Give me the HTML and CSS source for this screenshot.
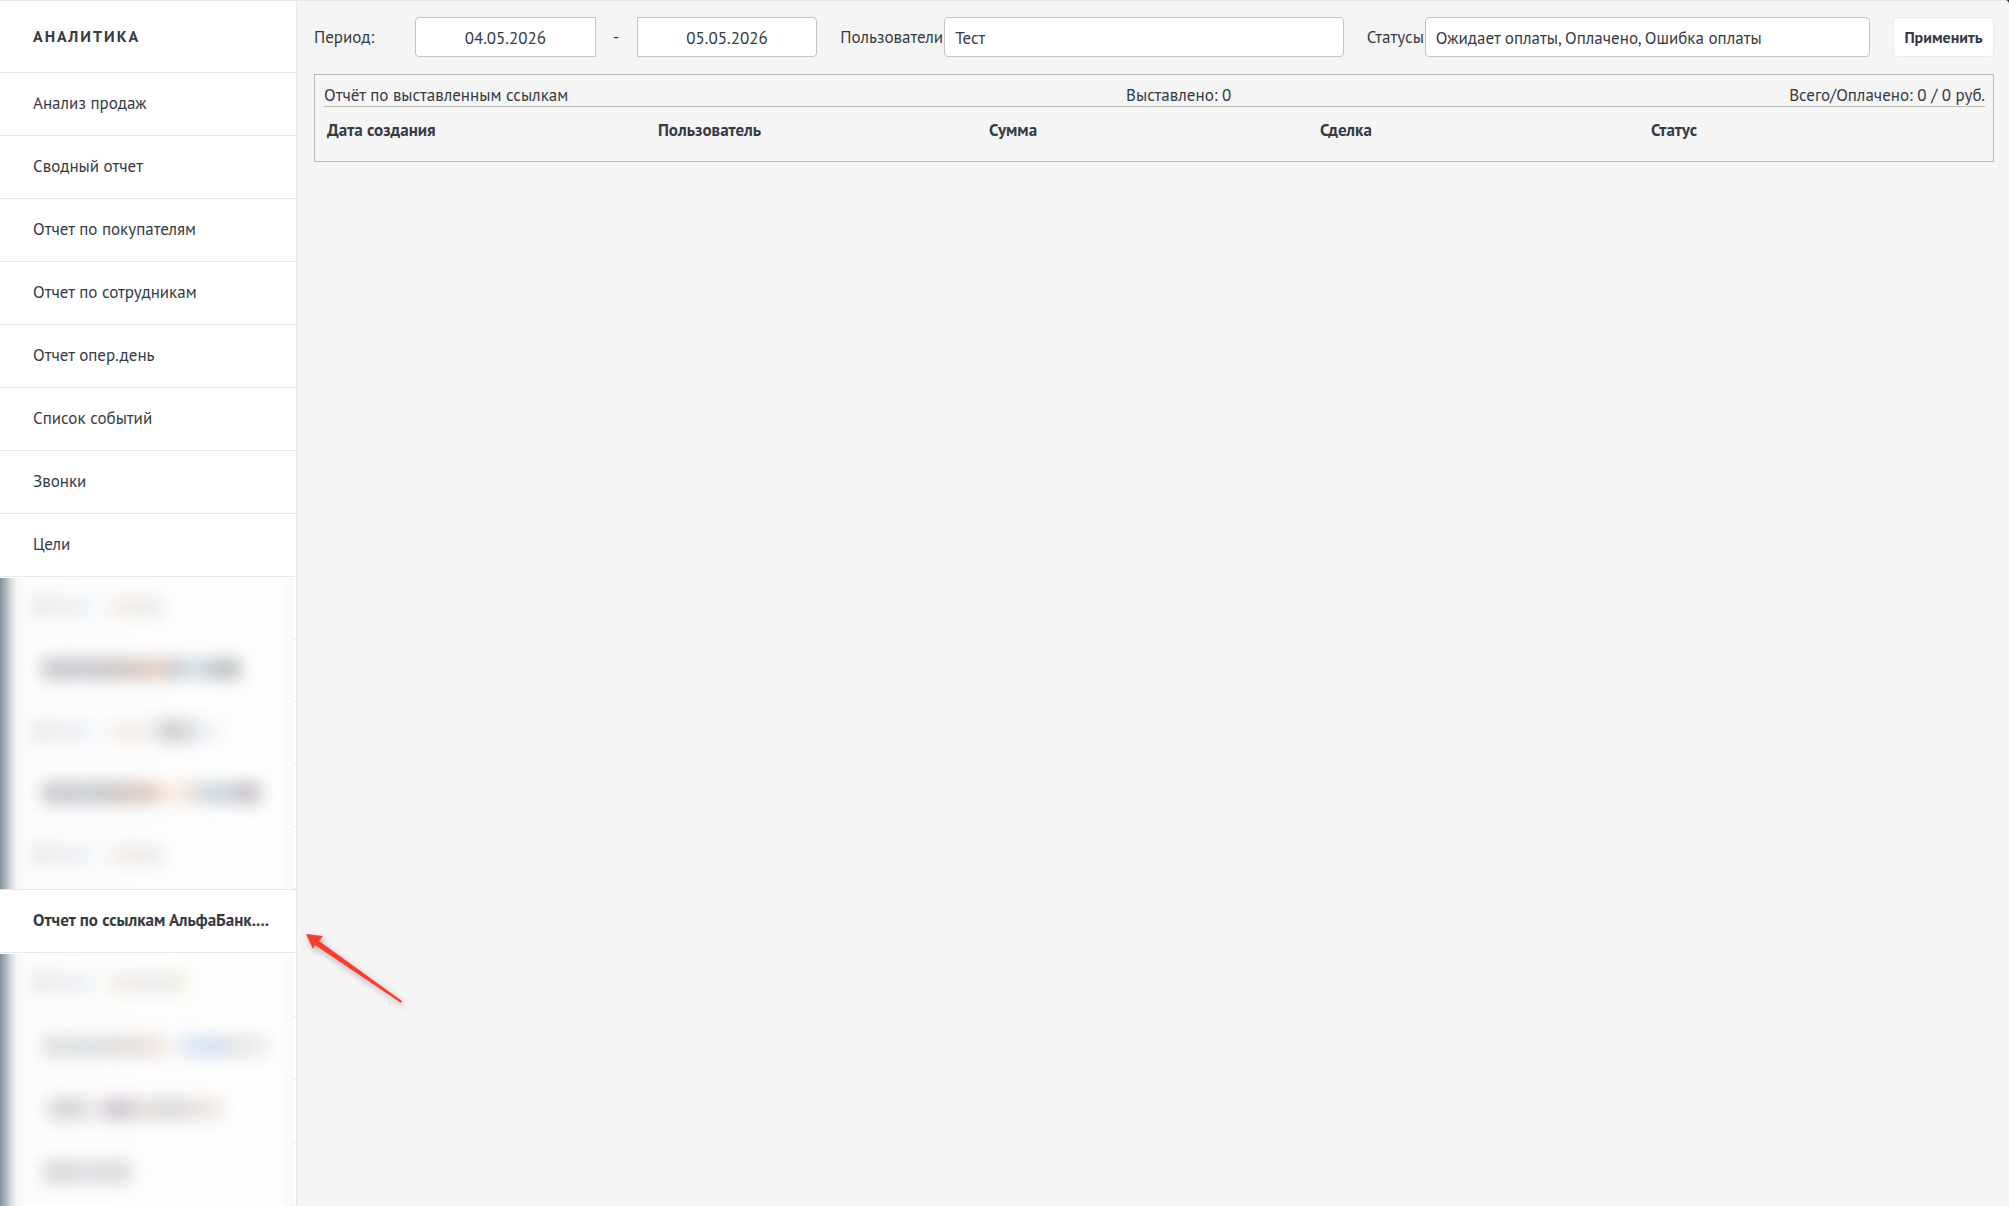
FILE: index.html
```html
<!DOCTYPE html>
<html lang="ru">
<head>
    <meta charset="UTF-8">
    <title>Аналитика</title>
    <link rel="stylesheet" href="styles.css">
</head>
<body>
<div class="page">
    <aside class="sidebar">
        <h1 class="sidebar-title">Аналитика</h1>
        <ul class="menu">
            <li><a href="#">Анализ продаж</a></li>
            <li><a href="#">Сводный отчет</a></li>
            <li><a href="#">Отчет по покупателям</a></li>
            <li><a href="#">Отчет по сотрудникам</a></li>
            <li><a href="#">Отчет опер.день</a></li>
            <li><a href="#">Список событий</a></li>
            <li><a href="#">Звонки</a></li>
            <li><a href="#">Цели</a></li>
        </ul>
        <div class="hidden-group" aria-hidden="true">
            <div class="hidden-row"><span class="smudge pale"></span></div>
            <div class="hidden-row"><span class="smudge dark"></span></div>
            <div class="hidden-row"><span class="smudge pale-long"></span></div>
            <div class="hidden-row"><span class="smudge dark-long"></span></div>
            <div class="hidden-row"><span class="smudge pale"></span></div>
        </div>
        <ul class="menu">
            <li><a class="active" href="#">Отчет по ссылкам АльфаБанк....</a></li>
        </ul>
        <div class="hidden-group last" aria-hidden="true">
            <div class="hidden-row"><span class="smudge pale-green"></span></div>
            <div class="hidden-row"><span class="smudge blue"></span></div>
            <div class="hidden-row"><span class="smudge violet"></span></div>
            <div class="hidden-row"><span class="smudge short"></span></div>
        </div>
    </aside>
    <main class="content">
        <form class="filter">
            <div class="field">
                <label class="period-label" for="date-from">Период:</label>
                <input class="date from" id="date-from" type="text" value="04.05.2026">
                <span class="dash">-</span>
                <input class="date to" type="text" value="05.05.2026" aria-label="Период по">
            </div>
            <div class="field">
                <label class="users-label" for="users">Пользователи</label>
                <input id="users" type="text" value="Тест">
            </div>
            <div class="field">
                <label class="status-label" for="statuses">Статусы</label>
                <input id="statuses" type="text" value="Ожидает оплаты, Оплачено, Ошибка оплаты">
            </div>
            <button class="apply" type="button">Применить</button>
        </form>
        <section class="report">
            <div class="report-head">
                <span>Отчёт по выставленным ссылкам</span>
                <span>Выставлено: 0</span>
                <span>Всего/Оплачено: 0 / 0 руб.</span>
            </div>
            <div class="report-body">
                <table class="report-table">
                    <thead>
                        <tr>
                            <th>Дата создания</th>
                            <th>Пользователь</th>
                            <th>Сумма</th>
                            <th>Сделка</th>
                            <th>Статус</th>
                        </tr>
                    </thead>
                </table>
            </div>
        </section>
    </main>
    <svg class="arrow" width="110" height="84" viewBox="0 0 110 84" aria-hidden="true">
        <path d="M6 6 L23 8 L19 13 L102 73 L101 75 L15 17 L13 21 Z" fill="#ff3b2f"/>
    </svg>
</div>
</body>
</html>
```
FILE: styles.css
```css
*{
    box-sizing: border-box;
}
html{
    background: #1c1320;
}
body{
    margin: 0;
    color: #363b44;
    font: 17px/20px "PT Sans", Roboto, sans-serif;
}
.page{
    position: relative;
    display: flex;
    min-height: 100vh;
    border-top: 1px solid #e6e6e6;
    border-top-right-radius: 4px;
    background: #f5f5f5;
    overflow: hidden;
}

/* sidebar */
.sidebar{
    display: flex;
    flex-direction: column;
    flex: none;
    width: 297px;
    border-right: 1px solid #e8e8e8;
    background: #fff;
}
.sidebar-title{
    height: 72px;
    margin: 0;
    padding: 0 33px;
    border-bottom: 1px solid #e8e8e8;
    font-size: 16px;
    line-height: 70px;
    letter-spacing: 2px;
    text-transform: uppercase;
}
.menu{
    margin: 0;
    padding: 0;
    list-style: none;
}
.menu li{
    border-bottom: 1px solid #e8e8e8;
}
.menu a{
    display: block;
    height: 62px;
    padding: 0 26px 0 33px;
    line-height: 60px;
    color: #363b44;
    text-decoration: none;
    white-space: nowrap;
}
.menu .active{
    font-weight: bold;
}

/* blurred rows */
.hidden-group{
    display: flex;
    flex-direction: column;
    height: 313px;
    padding-top: 1px;
    border-bottom: 1px solid #e8e8e8;
}
.hidden-group.last{
    flex: 1;
    height: auto;
    border-bottom: none;
}
.hidden-row{
    display: flex;
    align-items: center;
    flex: 1;
    padding: 0 2px 5px 0;
    background:
        linear-gradient(#e8e8e8, #e8e8e8) right bottom / 2px 1px no-repeat,
        linear-gradient(to right, #84929c 0, #a7b0b7 5px, #d9dde0 11px, #f5f6f7 17px, #fcfcfc 26px, #fefefe 280px, #f9f9f9 294px, #fff 294px);
}
.smudge{
    height: 22px;
    margin-left: 42px;
    filter: blur(8px);
    opacity: .85;
}
.pale, .pale-long, .pale-green{
    margin-left: 30px;
    opacity: .75;
}
.pale{
    width: 138px;
    background: linear-gradient(to right, #e6e4e1 0, #eeecea 24%, #e5edf8 38%, #fdfdfd 50%, #f3e8de 64%, #e5e7e8 88%, #f0f4f8);
}
.pale-long{
    width: 200px;
    background: linear-gradient(to right, #e6e4e1 0, #eeecea 16%, #e5edf8 26%, #fdfdfd 35%, #f3e8de 46%, #f0eeec 60%, #b9b5b7 70%, #c8c4c6 78%, #e5edf8 86%, #fcfaf4);
}
.pale-green{
    width: 160px;
    background: linear-gradient(to right, #e6e4e1 0, #eeecea 20%, #e5edf8 34%, #fdfdfd 42%, #f3e8de 54%, #e5e7e8 80%, #e6edcf 94%, #fcfcf0);
}
.dark{
    width: 200px;
    background: linear-gradient(to right, #c3bec3 0, #bec4ce 22%, #c5bdb7 34%, #d3c0bb 50%, #e3c9b5 58%, #bfc0cb 68%, #cfe2ee 76%, #b3b8ba 88%, #bcc0c0);
}
.dark-long{
    width: 220px;
    background: linear-gradient(to right, #c3bec3 0, #bec4ce 20%, #c5bdb7 32%, #d3c0bb 44%, #d8c0ab 50%, #faecdc 56%, #f7e4d6 64%, #c7d3dc 74%, #c1cdd7 84%, #bdb2bb 94%, #d0c8d0);
}
.blue{
    width: 230px;
    background: linear-gradient(to right, #dadcdd 0, #d8dce0 20%, #dcdad7 32%, #ebddd5 50%, #fcfaf8 56%, #d5e2f2 64%, #cddcec 76%, #e6e2de 88%, #edf0f7);
}
.violet{
    width: 176px;
    margin-left: 48px;
    background: linear-gradient(to right, #ced1d0 0, #cfcfcf 18%, #f7f0ed 27%, #c6b7cb 36%, #cbbfcd 44%, #e6dcd6 55%, #cfd0d6 70%, #eadfd6 86%, #f0e8e2);
}
.short{
    width: 90px;
    background: linear-gradient(to right, #d7d5d3, #d1d1d1 30%, #d9dce2 52%, #d1d1d1 75%, #d9d9d9);
}

/* filter */
.content{
    flex: 1;
    min-width: 0;
    padding: 16px 15px 16px 17px;
}
.filter{
    display: flex;
    gap: 23px;
    margin-bottom: 17px;
}
.field{
    display: flex;
    align-items: center;
    flex: 1;
    min-width: 0;
}
.field label{
    flex: none;
    white-space: nowrap;
}
.period-label{
    width: 101px;
}
.users-label{
    width: 104px;
}
.status-label{
    width: 58px;
}
.field input{
    flex: 1;
    min-width: 0;
    height: 40px;
    padding: 2px 10px 0;
    border: 1px solid #c4c4c4;
    border-radius: 4px;
    background: #fff;
    color: #363b44;
    font: inherit;
}
.field .date{
    text-align: center;
}
.field .from{
    border-radius: 4px 0 0 4px;
}
.field .to{
    border-radius: 0 4px 4px 0;
}
.dash{
    width: 41px;
    text-align: center;
}
.apply{
    width: 101px;
    height: 40px;
    padding: 0;
    border: 1px solid #ebebeb;
    border-radius: 4px;
    background: #fff;
    color: #363b44;
    font: bold 16px/20px "PT Sans", Roboto, sans-serif;
}

/* report */
.report{
    padding: 10px 8px 19px 9px;
    border: 1px solid #b9bcb0;
}
.report-head{
    display: flex;
    justify-content: space-between;
    padding-bottom: 1px;
    border-bottom: 1px solid #b9bcb0;
}
.report-body{
    padding: 11px 3px 0;
}
.report-table{
    width: 100%;
    border-collapse: collapse;
    table-layout: fixed;
}
.report-table th{
    padding: 2px 0;
    text-align: left;
}

.arrow{
    position: absolute;
    left: 300px;
    top: 927px;
    filter: drop-shadow(2px 3px 3px rgba(0, 0, 0, .3));
}
```
